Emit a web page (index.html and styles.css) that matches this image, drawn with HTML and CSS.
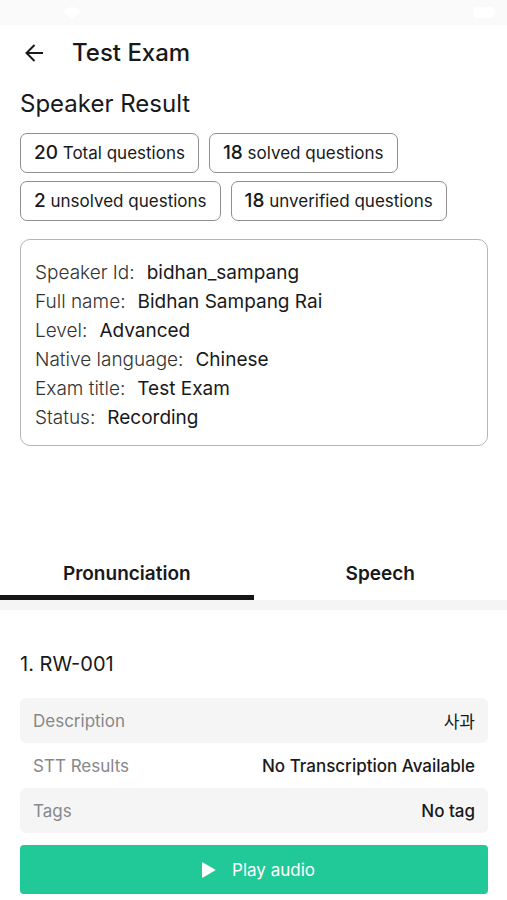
FILE: index.html
```html
<!DOCTYPE html>
<html lang="en">
<head>
    <meta charset="UTF-8">
    <meta name="viewport" content="width=device-width, initial-scale=1.0">
    <title>Test Exam</title>
    <link rel="stylesheet" href="styles.css">
</head>
<body>
    <!-- Status bar: wifi and battery, white on near-white -->
    <div class="status-bar">
        <svg class="wifi" width="16" height="12" viewBox="0 0 16 12" fill="currentColor">
            <path d="M0 4Q8-4 16 4L8 12Z"/>
        </svg>
        <svg class="battery" width="24" height="11" viewBox="0 0 24 11" fill="currentColor">
            <rect width="21" height="11" rx="3"/>
            <path d="M22 3.5Q24 5.5 22 7.5Z"/>
        </svg>
    </div>

    <header class="app-bar">
        <button type="button" class="back-button" aria-label="Back">
            <svg width="20" height="20" viewBox="0 0 20 20" fill="none" stroke="currentColor" stroke-width="2">
                <path d="M19 10H2.5M10.5 2L2.5 10L10.5 18"/>
            </svg>
        </button>
        <h1>Test Exam</h1>
    </header>

    <main>
        <!-- Speaker summary -->
        <section class="summary">
            <h2>Speaker Result</h2>
            <ul class="stats">
                <li><strong>20</strong> Total questions</li>
                <li><strong>18</strong> solved questions</li>
                <li><strong>2</strong> unsolved questions</li>
                <li><strong>18</strong> unverified questions</li>
            </ul>
            <dl class="speaker-card">
                <div><dt>Speaker Id:</dt><dd>bidhan_sampang</dd></div>
                <div><dt>Full name:</dt><dd>Bidhan Sampang Rai</dd></div>
                <div><dt>Level:</dt><dd>Advanced</dd></div>
                <div><dt>Native language:</dt><dd>Chinese</dd></div>
                <div><dt>Exam title:</dt><dd>Test Exam</dd></div>
                <div><dt>Status:</dt><dd>Recording</dd></div>
            </dl>
        </section>

        <!-- Tabs -->
        <div class="tabs" role="tablist">
            <button type="button" class="tab active" role="tab" aria-selected="true">Pronunciation</button>
            <button type="button" class="tab" role="tab" aria-selected="false">Speech</button>
        </div>

        <!-- Question -->
        <section class="question">
            <h3>1. RW-001</h3>
            <dl class="details">
                <div class="shaded"><dt>Description</dt><dd lang="ko" class="korean">사과</dd></div>
                <div><dt>STT Results</dt><dd>No Transcription Available</dd></div>
                <div class="shaded"><dt>Tags</dt><dd>No tag</dd></div>
            </dl>
            <button type="button" class="play-button">
                <svg width="14" height="16" viewBox="0 0 14 16" fill="currentColor">
                    <path d="M1 .5Q0 0 0 1V15Q0 16 1 15.5L13 8.6Q14 8 13 7.4Z"/>
                </svg>
                Play audio
            </button>
        </section>
    </main>
</body>
</html>
```
FILE: styles.css
```css
* {
    margin: 0;
    padding: 0;
    box-sizing: border-box;
}

body {
    font-family: Inter, "Noto Sans CJK KR", sans-serif;
    font-size: 19px;
    color: #18191b;
    background: #fff;
}

button {
    font: inherit;
    color: inherit;
    background: none;
    border: none;
    cursor: pointer;
}

.status-bar {
    display: flex;
    justify-content: space-between;
    align-items: center;
    height: 25px;
    padding: 0 10px 0 64px;
    background: #fafafa;
    color: #fff;
}

/* App bar */
.app-bar {
    display: flex;
    align-items: center;
    gap: 28px;
    height: 56px;
    padding: 0 24px;
}

.back-button {
    display: flex;
}

.app-bar h1 {
    font-size: 24px;
    font-weight: 500;
    line-height: 32px;
}

/* Speaker summary */
.summary {
    padding: 7px 19px 0 20px;
}

.summary h2 {
    font-size: 24px;
    font-weight: 400;
    line-height: 32px;
}

.stats {
    display: flex;
    flex-wrap: wrap;
    gap: 8px 10px;
    margin-top: 13px;
    list-style: none;
}

.stats li {
    height: 40px;
    padding: 0 13px;
    border: 1px solid #8f8f8f;
    border-radius: 7px;
    font-size: 17px;
    line-height: 38px;
}

.stats strong {
    font-size: 19px;
    font-weight: 500;
}

.speaker-card {
    margin-top: 18px;
    padding: 18px 14px 13px;
    border: 1px solid #b5b5b5;
    border-radius: 10px;
    line-height: 29px;
}

.speaker-card div {
    display: flex;
    gap: 12px;
}

.speaker-card dt {
    font-weight: 300;
    color: #333;
}

/* Tabs */
.tabs {
    display: flex;
    margin-top: 100px;
    border-bottom: 10px solid #f5f5f5;
}

.tab {
    flex: 1;
    height: 54px;
    padding-top: 5px;
    border-bottom: 5px solid transparent;
    font-size: 19px;
    font-weight: 600;
}

.tab.active {
    border-color: #151618;
}

/* Question */
.question {
    padding: 40px 19px 6px 20px;
}

.question h3 {
    font-size: 20px;
    font-weight: 400;
    line-height: 28px;
}

.details {
    margin-top: 20px;
    font-size: 17px;
}

.details div {
    display: flex;
    justify-content: space-between;
    align-items: center;
    height: 45px;
    padding: 0 13px;
    border-radius: 6px;
}

.details .shaded {
    background: #f5f5f5;
}

.details dt {
    color: #87888a;
}

.details dd {
    font-weight: 500;
}

.details .korean {
    font-weight: 400;
}

.play-button {
    display: flex;
    justify-content: center;
    align-items: center;
    gap: 16px;
    width: 100%;
    height: 49px;
    margin-top: 12px;
    padding-left: 9px;
    border-radius: 4px;
    background: #20c997;
    color: #fff;
    font-size: 17px;
}
```
